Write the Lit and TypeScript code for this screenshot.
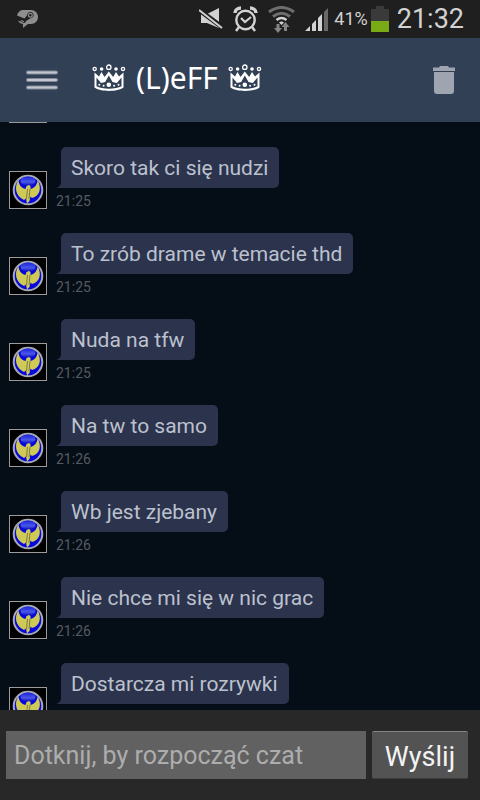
import { LitElement, html, css, nothing } from "lit";
import { customElement, property } from "lit/decorators.js";

interface Message {
  text?: string;
  time?: string;
}

const MESSAGES: Message[] = [
  {},
  { text: "Skoro tak ci się nudzi", time: "21:25" },
  { text: "To zrób drame w temacie thd", time: "21:25" },
  { text: "Nuda na tfw", time: "21:25" },
  { text: "Na tw to samo", time: "21:26" },
  { text: "Wb jest zjebany", time: "21:26" },
  { text: "Nie chce mi się w nic grac", time: "21:26" },
  { text: "Dostarcza mi rozrywki" },
];

const crown = () => html`<svg class="crown" viewBox="0 0 34 28" width="34" height="28" aria-hidden="true">
  <g fill="none" stroke="#fff" stroke-width="1.3">
    <circle cx="16.8" cy="3.2" r="2.2" />
    <circle cx="2.7" cy="4.9" r="1.6" />
    <circle cx="31" cy="4.9" r="1.6" />
  </g>
  <g fill="#fff">
    <circle cx="9.6" cy="5" r="1.8" />
    <circle cx="24" cy="5" r="1.8" />
    <path d="M2.500 8.500L7 12.500L9.500 8L12.500 13L16.800 7.500L21.200 13L24 8L27 12.500L31.500 8.500V23.500C26 28 8 28 2.500 23.500ZM4.500 13.500V22.300C10 25.600 24 25.600 29.500 22.300V13.500L24.800 19L20.500 18L16.800 11.500L13.200 18L9 19Z" fill-rule="evenodd" />
    <circle cx="16.800" cy="20.800" r="2.300" />
    <circle cx="11.600" cy="21.700" r="1" />
    <circle cx="22.100" cy="21.700" r="1" />
    <circle cx="7.300" cy="20.800" r="1" />
    <circle cx="26.500" cy="20.800" r="1" />
  </g>
</svg>`;

@customElement("chat-message")
export class ChatMessage extends LitElement {
  @property() text?: string;
  @property() time?: string;

  static styles = css`
    :host {
      display: flex;
      align-items: flex-end;
      flex: none;
      min-height: 62px;
      padding-left: 9px;
      gap: 9px;
    }
    .avatar {
      display: block;
      flex: none;
      width: 38px;
      height: 38px;
    }
    .body {
      display: flex;
      flex-direction: column;
      align-items: flex-start;
      align-self: flex-start;
    }
    .bubble {
      position: relative;
      margin-left: 5px;
      padding: 2px 11px 0 10px;
      border-radius: 5px 5px 5px 0;
      background: #2b334d;
      color: #bcc1ce;
      font-size: 21px;
      line-height: 39px;
    }
    .tail {
      position: absolute;
      left: -5px;
      bottom: 0;
      width: 5px;
      height: 5px;
    }
    .time {
      color: #555a60;
      font-size: 14px;
      line-height: 16px;
      margin-top: 5px;
    }
  `;

  render() {
    return html`
      <svg class="avatar" viewBox="0 0 38 38" role="img" aria-label="Avatar">
        <defs>
          <linearGradient id="shine" x2="0" y2="1">
            <stop offset="0" stop-color="#1a22d8" />
            <stop offset=".6" stop-color="#4a58ea" />
            <stop offset="1" stop-color="#0a10b8" />
          </linearGradient>
        </defs>
        <rect x=".5" y=".5" width="37" height="37" fill="#000" stroke="#9b9b9b" />
        <circle cx="19" cy="19" r="14.300" fill="#0808dc" stroke="#a9abb4" stroke-width="2" />
        <ellipse cx="19" cy="10" rx="7.500" ry="4.500" fill="url(#shine)" />
        <path d="M9.500 9C9.500 13 12 17 16.500 18L17.500 15L20 14L21.500 15V18C26 17 28.500 13 28.500 9C33 17 31 25 23 27L21.500 25.500L20.500 30L18 32.500L17 27.500L15 29C6.500 25 5 16 9.500 9Z" fill="#cfca56" />
        <path d="M18.500 18L17.500 28M21 18L20 28" stroke="#7d7a4a" fill="none" />
      </svg>
      <div class="body">
        ${this.text
          ? html`<div class="bubble">
              <svg class="tail" viewBox="0 0 5 5" aria-hidden="true"><path d="M5 0V5H0Q4 4 5 0Z" fill="#2b334d" /></svg>
              ${this.text}
            </div>`
          : nothing}
        ${this.time ? html`<time class="time">${this.time}</time>` : nothing}
      </div>
    `;
  }
}

@customElement("status-bar")
export class StatusBar extends LitElement {
  static styles = css`
    :host {
      display: flex;
      flex: none;
      align-items: center;
      height: 38px;
      padding: 0 16px;
      background: #1f1f1f;
      color: #d2d2d2;
    }
    svg {
      display: block;
      flex: none;
    }
    .icons {
      display: flex;
      align-items: center;
      margin-left: auto;
      gap: 10px;
    }
    .power {
      display: flex;
      align-items: center;
      gap: 3px;
      margin-left: 5px;
    }
    .percent {
      font-size: 18px;
      line-height: 24px;
    }
    .clock {
      margin-left: 8px;
      font-size: 27px;
      line-height: 38px;
    }
  `;

  render() {
    return html`
      <svg width="22" height="20" viewBox="0 0 22 20" aria-hidden="true">
        <path d="M8 1H15C19 1 22 4 22 8C22 12 19 15 15 15H12L7 19V15C4 14.500 2.500 13 2 11.500L6 13C8 15 10 13.500 10 12L14 9.500C19 9 18.500 3 14.500 3C12 3 11 5 11 6.500L8.500 9.500L1 6.500C2 3 4 1 8 1Z" fill="#8e8e8e" />
        <circle cx="14.300" cy="6.300" r="1.900" fill="none" stroke="#8e8e8e" stroke-width="1.200" />
        <path d="M5 11.500L8 12.700" stroke="#8e8e8e" stroke-width="1.200" />
      </svg>
      <div class="icons">
        <svg width="24" height="24" viewBox="0 0 24 24" aria-hidden="true">
          <path d="M2 7H8L20 1V21L8 16H2Z" fill="#d2d2d2" />
          <path d="M0 3L23 20" stroke="#1f1f1f" stroke-width="5" />
          <path d="M0 3L23 21" stroke="#d2d2d2" stroke-width="2" />
        </svg>
        <svg width="25" height="26" viewBox="0 0 25 26" fill="none" stroke="#d2d2d2" aria-hidden="true">
          <circle cx="12.500" cy="14" r="9.200" stroke-width="2.400" />
          <path d="M8 12L12 16L18 11" stroke-width="2.200" />
          <path d="M2 7C2 4 5 2 8 2M17 2C20 2 23 4 23 7" stroke-width="3.500" />
          <path d="M6 21L3 25M19 21L22 25" stroke-width="2.500" />
        </svg>
        <svg width="27" height="27" viewBox="0 0 27 27" fill="none" aria-hidden="true">
          <path d="M1 6Q13.500 -3 26 6M5 10.500Q13.500 4 22 10.500" stroke="#6e6e6e" stroke-width="3" />
          <path d="M8.500 14Q13.500 10 18.500 14" stroke="#d2d2d2" stroke-width="2.500" />
          <path d="M11 16.500Q13.500 14.500 16 16.500L13.500 19Z" fill="#d2d2d2" />
          <path d="M8.500 18H11.500V22H14L10 27L6 22H8.500ZM16 25H19V21H21.500L17.500 16L13.500 21H16Z" fill="#858585" />
        </svg>
        <svg width="24" height="24" viewBox="0 0 24 24" aria-hidden="true">
          <path d="M0 24L5 19V24ZM7 17L11 13V24H7ZM13 11L17 7V24H13Z" fill="#d2d2d2" />
          <path d="M19 5L23 1V24H19Z" fill="#696969" />
        </svg>
      </div>
      <div class="power">
        <span class="percent">41%</span>
        <svg width="18" height="26" viewBox="0 0 18 26" aria-hidden="true">
          <path d="M5 0H13V3H18V15H0V3H5Z" fill="#3a3a3a" />
          <path d="M0 15H18V26H0Z" fill="#7aaa16" />
        </svg>
      </div>
      <time class="clock">21:32</time>
    `;
  }
}

@customElement("app-root")
export class AppRoot extends LitElement {
  static styles = css`
    :host {
      display: flex;
      flex-direction: column;
      height: 100vh;
      overflow: hidden;
      background: #050e17;
      font-family: Roboto, "Noto Sans", sans-serif;
    }
    .header {
      display: flex;
      flex: none;
      align-items: center;
      height: 84px;
      padding: 0 14px 0 20px;
      background: #324056;
      color: #fff;
    }
    .icon-button {
      display: grid;
      place-items: center;
      width: 44px;
      height: 48px;
      padding: 0;
      border: 0;
      background: none;
    }
    .title {
      display: flex;
      flex: 1;
      align-items: center;
      gap: 10px;
      margin: 0 0 4px 28px;
      font: 400 30px/40px "Noto Sans", sans-serif;
    }
    .chat {
      display: flex;
      flex: 1;
      flex-direction: column;
      justify-content: flex-end;
      gap: 24px;
      min-height: 0;
      overflow: hidden;
    }
    .chat::after {
      content: "";
      flex: none;
      margin-top: -39px;
    }
    .composer {
      display: flex;
      flex: none;
      gap: 6px;
      padding: 21px 12px 21px 6px;
      background: #282828;
    }
    .input {
      flex: 1;
      min-width: 0;
      height: 48px;
      box-sizing: border-box;
      padding: 0 8px;
      border: 0;
      border-radius: 0;
      background: #616161;
      color: #fff;
      font: 400 25px/32px Roboto, sans-serif;
    }
    .input::placeholder {
      color: #adadad;
      opacity: 1;
    }
    .send {
      width: 96px;
      height: 48px;
      padding: 4px 0 0;
      border: 0;
      border-top: 1px solid #858585;
      border-bottom: 1px solid #3e3e3e;
      border-radius: 2px;
      background: #535353;
      color: #f3f3f3;
      font: 400 27px/40px Roboto, sans-serif;
    }
  `;

  render() {
    return html`
      <status-bar></status-bar>
      <header class="header">
        <button class="icon-button" aria-label="Menu">
          <svg width="32" height="20" viewBox="0 0 32 20" aria-hidden="true">
            <path d="M2 2.500H30M2 10H30M2 17.500H30" stroke="#808997" stroke-width="4" stroke-linecap="round" />
            <path d="M2 2.500H30M2 10H30M2 17.500H30" stroke="#c3c7cd" stroke-width="2" stroke-linecap="round" />
          </svg>
        </button>
        <h1 class="title">${crown()}<span>(L)eFF</span>${crown()}</h1>
        <button class="icon-button" aria-label="Usuń">
          <svg width="22" height="28" viewBox="0 0 22 28" aria-hidden="true">
            <path d="M0 1.500H6L7 0H15L16 1.500H22V5H0ZM1 6H21V25Q21 28 18 28H4Q1 28 1 25Z" fill="#9ea5b0" />
          </svg>
        </button>
      </header>
      <main class="chat">
        ${MESSAGES.map((m) => html`<chat-message .text=${m.text} .time=${m.time}></chat-message>`)}
      </main>
      <form class="composer" @submit=${(e: Event) => e.preventDefault()}>
        <input class="input" type="text" aria-label="Wiadomość" placeholder="Dotknij, by rozpocząć czat" />
        <button class="send" type="submit">Wyślij</button>
      </form>
    `;
  }
}
